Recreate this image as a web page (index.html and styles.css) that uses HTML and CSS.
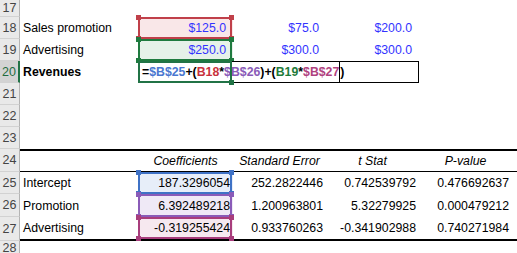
FILE: index.html
```html
<!DOCTYPE html>
<html>
<head>
<meta charset="utf-8">
<link rel="stylesheet" href="styles.css">
</head>
<body>
<div class="sheet">
  <div class="rh">17</div><div class="c"></div><div class="c"></div><div class="c"></div><div class="c"></div><div class="c"></div><div class="c"></div>

  <div class="rh">18</div><div class="c lbl">Sales promotion</div><div class="c num cur ref red">$125.0</div><div class="c num cur">$75.0</div><div class="c num cur">$200.0</div><div class="c"></div><div class="c"></div>

  <div class="rh">19</div><div class="c lbl">Advertising</div><div class="c num cur ref green">$250.0</div><div class="c num cur">$300.0</div><div class="c num cur">$300.0</div><div class="c"></div><div class="c"></div>

  <div class="rh sel">20</div><div class="c lbl b">Revenues</div><div class="c edit"><span class="f">=<span class="t-blue">$B$25</span>+(<span class="t-red">B18</span>*<span class="t-purple">$B$26</span>)+(<span class="t-green">B19</span>*<span class="t-mag">$B$27</span><span class="caret"></span>)</span></div><div class="c"></div><div class="c"></div>

  <div class="rh">21</div><div class="c"></div><div class="c"></div><div class="c"></div><div class="c"></div><div class="c"></div><div class="c"></div>
  <div class="rh">22</div><div class="c"></div><div class="c"></div><div class="c"></div><div class="c"></div><div class="c"></div><div class="c"></div>
  <div class="rh">23</div><div class="c"></div><div class="c"></div><div class="c"></div><div class="c"></div><div class="c"></div><div class="c"></div>

  <div class="rh">24</div><div class="c top"></div><div class="c top hd">Coefficients</div><div class="c top hd">Standard Error</div><div class="c top hd">t Stat</div><div class="c top hd">P-value</div><div class="c top"></div>

  <div class="rh">25</div><div class="c lbl">Intercept</div><div class="c num ref blue">187.3296054</div><div class="c num">252.2822446</div><div class="c num">0.742539792</div><div class="c num">0.476692637</div><div class="c"></div>

  <div class="rh">26</div><div class="c lbl">Promotion</div><div class="c num ref purple">6.392489218</div><div class="c num">1.200963801</div><div class="c num">5.32279925</div><div class="c num">0.000479212</div><div class="c"></div>

  <div class="rh">27</div><div class="c lbl bot">Advertising</div><div class="c num bot ref mag">-0.319255424</div><div class="c num bot">0.933760263</div><div class="c num bot">-0.341902988</div><div class="c num bot">0.740271984</div><div class="c bot"></div>

  <div class="rh">28</div><div class="c"></div><div class="c"></div><div class="c"></div><div class="c"></div><div class="c"></div><div class="c"></div>
</div>
</body>
</html>
```

FILE: styles.css
```css
html, body {
  margin: 0;
  padding: 0;
}
body {
  width: 517px;
  height: 253px;
  overflow: hidden;
  background: #ffffff;
  font-family: "Liberation Sans", Arial, sans-serif;
  font-size: 12.3px;
  color: #000;
}
.sheet {
  display: grid;
  grid-template-columns: 20px 118px 95px 93px 93px 93px 1fr;
  grid-template-rows: 17px repeat(6, 22px) 23px 22px 23px 24px 1fr;
  height: 253px;
}
.rh {
  box-sizing: border-box;
  background: #e9e9e9;
  border-right: 1px solid #b4b4b4;
  border-bottom: 1px solid #d2d2d2;
  color: #444;
  font-size: 12.5px;
  display: flex;
  align-items: center;
  justify-content: center;
}
.rh.sel {
  background: #d3d3d3;
  color: #1f6b40;
  border-right: 2px solid #217346;
}
.c {
  box-sizing: border-box;
  position: relative;
  display: flex;
  align-items: center;
  white-space: nowrap;
  min-width: 0;
}
.lbl { padding-left: 3px; }
.b { font-weight: bold; }
.num { justify-content: flex-end; padding-right: 3px; }
.cur { padding-right: 7px; color: #3333ff; }
.hd { justify-content: center; font-style: italic; }
.top { border-top: 2px solid #000; border-bottom: 1px solid #000; }
.bot { border-bottom: 2px solid #000; }

.ref { background: var(--f); }
.ref::before {
  content: "";
  position: absolute;
  top: 0; left: 0; right: 1px; bottom: 0;
  border: 2px solid var(--c);
  z-index: 1;
}
.ref::after {
  content: "";
  position: absolute;
  top: -2px; left: -2px; right: -1px; bottom: -2px;
  z-index: 2;
  background:
    linear-gradient(var(--c), var(--c)) left top / 5px 5px no-repeat,
    linear-gradient(var(--c), var(--c)) right top / 5px 5px no-repeat,
    linear-gradient(var(--c), var(--c)) left bottom / 5px 5px no-repeat,
    linear-gradient(var(--c), var(--c)) right bottom / 5px 5px no-repeat;
}
.red { --c: #c0404a; --f: #f9e7e8; }
.green { --c: #1f7a3f; --f: #e6f1e9; }
.blue { --c: #3f72c6; --f: #e7eef9; }
.purple { --c: #8a5bb8; --f: #efe9f6; }
.mag { --c: #a83d7c; --f: #f6e8ef; }

.edit {
  grid-column: span 3;
  border: 1px solid #000;
  padding-left: 3px;
  align-items: stretch;
  font-weight: bold;
  line-height: 20px;
  background: #fff;
  z-index: 3;
}
.edit::before {
  content: "";
  position: absolute;
  left: -1px; top: -1px;
  width: 94px; height: 22px;
  box-sizing: border-box;
  border: 2px solid #217346;
}
.edit::after {
  content: "";
  position: absolute;
  left: 90px; top: 18px;
  width: 5px; height: 5px;
  background: #217346;
}
.f { display: block; }
.t-blue { color: #4a77d0; }
.t-red { color: #c8323c; }
.t-purple { color: #8a5bb8; }
.t-green { color: #1e7b3a; }
.t-mag { color: #b0427f; }
.caret {
  display: inline-block;
  width: 1px;
  height: 20px;
  background: #000;
  vertical-align: top;
}
```
